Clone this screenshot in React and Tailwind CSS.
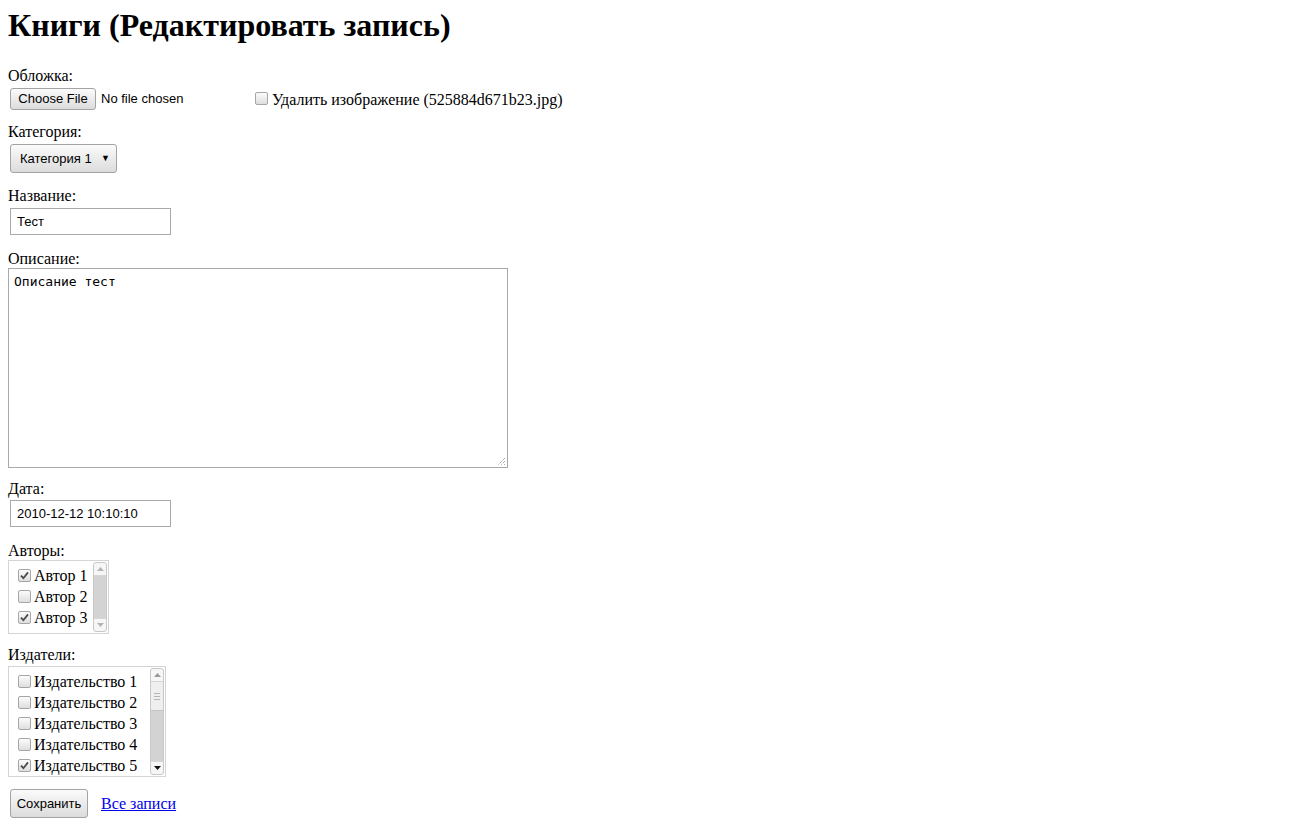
import React from 'react';

const Check = ({ checked }) => (
    <span className="inline-flex w-[13px] h-[13px] shrink-0 items-center justify-center rounded-[2px] border border-[#a6a6a6] bg-gradient-to-b from-[#fcfcfc] to-[#dedede]">
        {checked && (
            <svg width="9" height="9" viewBox="0 0 9 9">
                <path d="M1 4.6 L3.4 7.2 L8 1.4" fill="none" stroke="#4a4a4a" strokeWidth="1.8" />
            </svg>
        )}
    </span>
);

const Scrollbar = ({ thumbTop, thumbHeight, light, darkArrow }) => (
    <div className="relative w-[14px] h-full rounded-[3px] border border-[#c8c8c8] bg-[#d3d3d3] overflow-hidden">
        <div className="absolute top-0 left-0 right-0 h-[13px] bg-[#f6f6f6] border-b border-[#d6d6d6] flex items-center justify-center">
            <svg width="7" height="4" viewBox="0 0 7 4"><path d="M0 4 L3.5 0 L7 4 Z" fill={darkArrow ? '#9a9a9a' : '#b4b4b4'} /></svg>
        </div>
        {light && (
            <div
                className="absolute left-0 right-0 bg-[#efefef] border-b border-[#c4c4c4] flex flex-col items-center justify-center gap-[2px]"
                style={{ top: thumbTop, height: thumbHeight }}
            >
                <span className="w-[6px] h-px bg-[#b5b5b5]" />
                <span className="w-[6px] h-px bg-[#b5b5b5]" />
                <span className="w-[6px] h-px bg-[#b5b5b5]" />
            </div>
        )}
        <div className="absolute bottom-0 left-0 right-0 h-[13px] bg-[#f6f6f6] border-t border-[#d6d6d6] flex items-center justify-center">
            <svg width="7" height="4" viewBox="0 0 7 4"><path d="M0 0 L3.5 4 L7 0 Z" fill={darkArrow ? '#111' : '#b4b4b4'} /></svg>
        </div>
    </div>
);

const CheckList = ({ items, width, height, light, darkArrow }) => (
    <div className="flex border border-[#d4d4d4] bg-white overflow-hidden" style={{ width, height }}>
        <div className="flex-1 pt-[4px] pl-[9px]">
            {items.map(([label, checked]) => (
                <div key={label} className="flex items-center h-[21px] leading-[21px]">
                    <Check checked={checked} />
                    <span className="ml-[3px] whitespace-nowrap">{label}</span>
                </div>
            ))}
        </div>
        <div className="py-[1px] pr-[1px]">
            <Scrollbar light={light} darkArrow={darkArrow} thumbTop={13} thumbHeight={29} />
        </div>
    </div>
);

const btn = "rounded-[3px] border border-[#a3a3a3] bg-gradient-to-b from-[#fbfbfb] to-[#dcdcdc] font-['Liberation_Sans',Arial,sans-serif] text-[13px] text-black";
const label = "leading-[20px] h-[18px]";

export default function App() {
    return (
        <div className="px-2 pb-4 font-['Liberation_Serif','Times_New_Roman',serif] text-base text-black bg-white min-h-[837px]">
            <h1 className="pt-[7px] text-[32px] font-bold leading-[37px]">Книги (Редактировать запись)</h1>

            <div className={`mt-[22px] ${label}`}>Обложка:</div>
            <div className="mt-[4px] flex items-center h-[22px]">
                <div className="w-[240px] flex items-center ml-[2px]">
                    <button className={`${btn} w-[86px] h-[22px] leading-[20px]`}>Choose File</button>
                    <span className="ml-[5px] font-['Liberation_Sans',Arial,sans-serif] text-[13px]">No file chosen</span>
                </div>
                <span className="ml-[5px] mt-[2px]"><Check checked={false} /></span>
                <span className="ml-[4px] mt-[1px]">Удалить изображение (525884d671b23.jpg)</span>
            </div>

            <div className={`mt-[12px] ${label}`}>Категория:</div>
            <div className={`${btn} mt-[4px] ml-[2px] w-[107px] h-[29px] flex items-center pl-[9px] pr-[6px] justify-between`}>
                <span>Категория 1</span>
                <span className="text-[9px]">▼</span>
            </div>

            <div className={`mt-[13px] ${label}`}>Название:</div>
            <div className="mt-[4px] ml-[2px] w-[161px] h-[27px] border border-[#a9a9a9] flex items-center pl-[6px] font-['Liberation_Sans',Arial,sans-serif] text-[13px]">Тест</div>

            <div className={`mt-[14px] ${label}`}>Описание:</div>
            <div className="relative mt-[1px] w-[500px] h-[200px] border border-[#a9a9a9] pl-[5px] pt-[5px] font-['DejaVu_Sans_Mono',monospace] text-[13px] leading-[16px]">
                Описание тест
                <svg className="absolute right-[1px] bottom-[1px]" width="9" height="9" viewBox="0 0 9 9">
                    <path d="M8 1 L1 8 M8 4 L4 8 M8 7 L7 8" stroke="#8a8a8a" strokeWidth="1" strokeDasharray="1 1" />
                </svg>
            </div>

            <div className={`mt-[11px] ${label}`}>Дата:</div>
            <div className="mt-[3px] ml-[2px] w-[161px] h-[27px] border border-[#a9a9a9] flex items-center pl-[6px] font-['Liberation_Sans',Arial,sans-serif] text-[13px]">2010-12-12 10:10:10</div>

            <div className={`mt-[14px] ${label}`}>Авторы:</div>
            <div className="mt-[1px]">
                <CheckList
                    width={101}
                    height={74}
                    items={[['Автор 1', true], ['Автор 2', false], ['Автор 3', true]]}
                />
            </div>

            <div className={`mt-[11px] ${label}`}>Издатели:</div>
            <div className="mt-[3px]">
                <CheckList
                    width={158}
                    height={111}
                    light
                    darkArrow
                    items={[
                        ['Издательство 1', false],
                        ['Издательство 2', false],
                        ['Издательство 3', false],
                        ['Издательство 4', false],
                        ['Издательство 5', true],
                    ]}
                />
            </div>

            <div className="mt-[12px] flex items-center">
                <button className={`${btn} ml-[2px] w-[78px] h-[29px]`}>Сохранить</button>
                <a href="#" className="ml-[13px] text-[#0000ee] underline">Все записи</a>
            </div>
        </div>
    );
}
